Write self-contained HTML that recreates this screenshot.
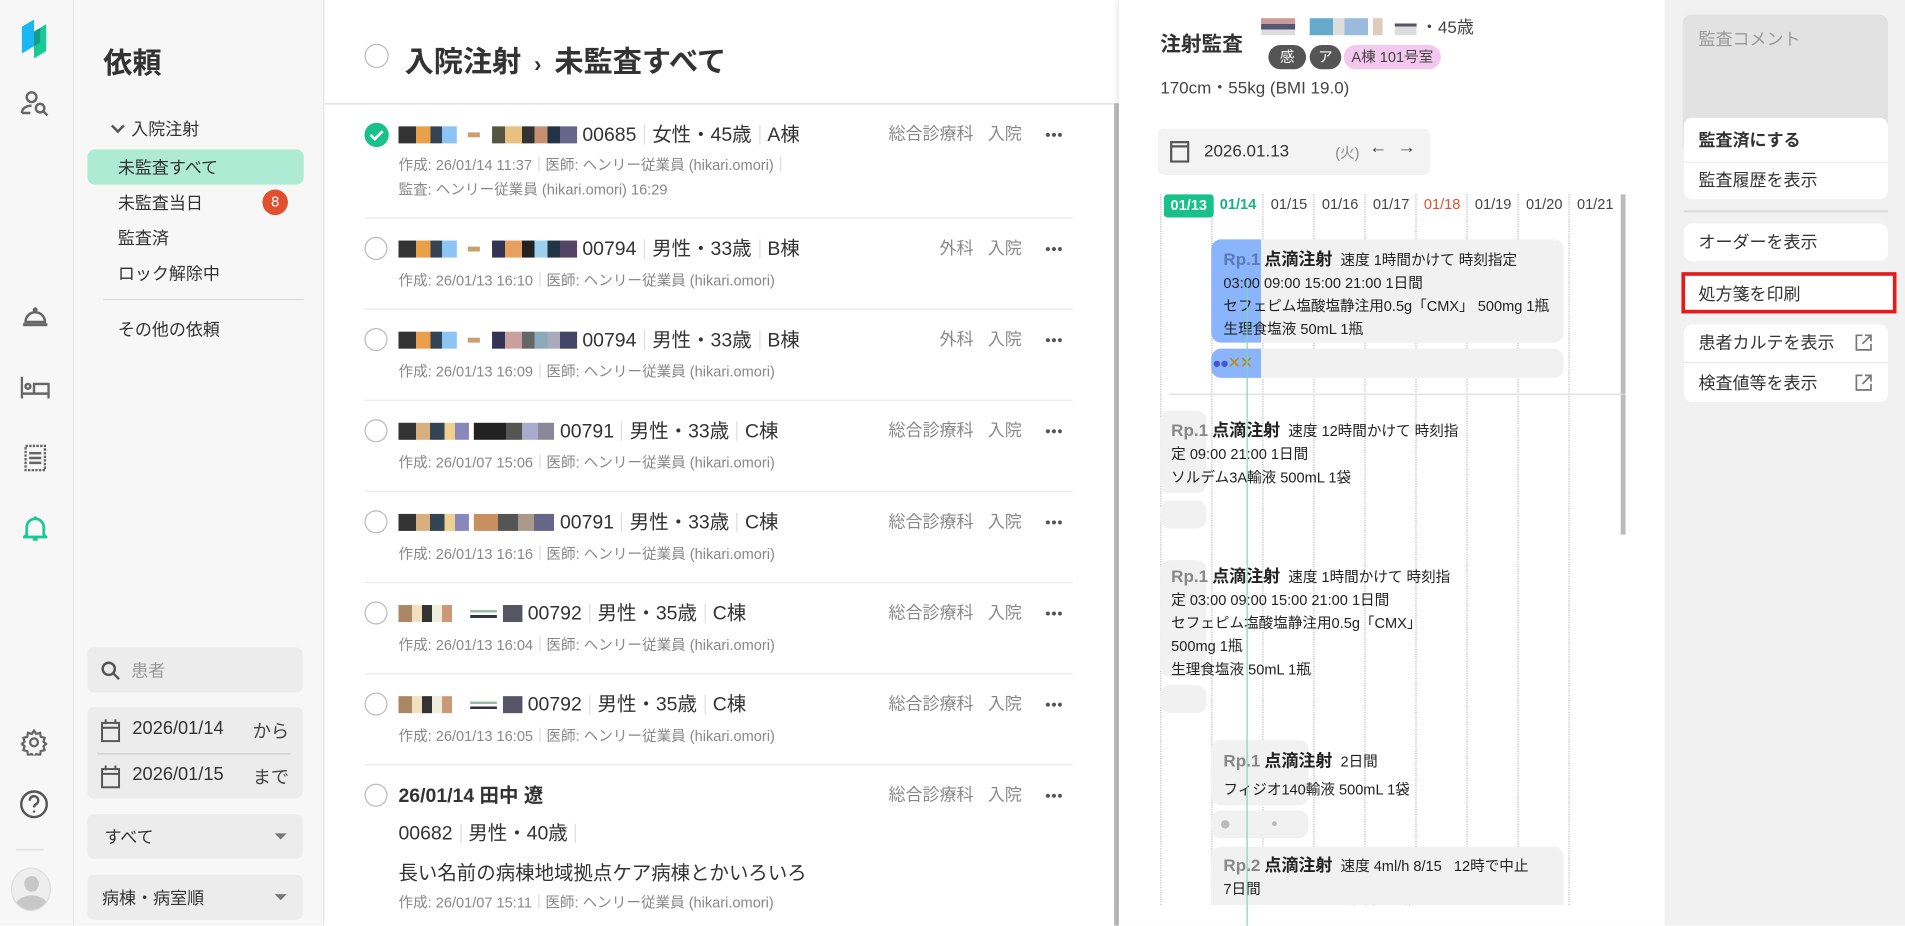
<!DOCTYPE html>
<html lang="ja"><head><meta charset="utf-8">
<style>
*{box-sizing:border-box;margin:0;padding:0}
html,body{width:1905px;height:926px;overflow:hidden;background:#fff}
body{font-family:"Liberation Sans","Noto Sans CJK JP",sans-serif;color:#333}
#w{position:absolute;left:0;top:0;width:1568px;height:762px;transform:scale(1.21492);transform-origin:0 0;overflow:hidden;background:#fff}
.a{position:absolute}
.rail{left:0;top:0;width:61px;height:762px;background:#f7f7f7;border-right:1px solid #e6e6e6}
.side{left:61px;top:0;width:206px;height:762px;background:#f7f7f7;border-right:1px solid #e4e4e4}
.nav{font-size:14px;color:#333;position:absolute;left:97px}
.inp{position:absolute;left:72px;width:177px;background:#ececec;border-radius:5px;font-size:14px}
.bl{display:inline-block;height:14px;vertical-align:-2px}
.row{position:absolute;left:300px;width:583px}
.circ{position:absolute;left:0;top:2px;width:19px;height:19px;border:1.5px solid #bbb;border-radius:50%}
.t1{position:absolute;left:28px;top:-2px;font-size:16px;white-space:nowrap;color:#333}
.sep{display:inline-block;width:1px;height:16px;background:#ddd;margin:0 6px;vertical-align:-3px}
.meta{position:absolute;left:28px;font-size:12px;color:#888;white-space:nowrap}
.meta .sep{height:12px;margin:0 5px;vertical-align:-1px}
.rt{position:absolute;right:42px;top:1px;font-size:14px;color:#888;white-space:nowrap}
.dots{position:absolute;right:9px;top:10px;width:14px;height:4px;background:radial-gradient(circle,#555 1.6px,transparent 1.8px) 0 0/5px 4px repeat-x}
.hr{position:absolute;left:300px;width:583px;height:1px;background:#eaeaea}
.btn{position:absolute;left:1386px;width:168px;background:#fff;font-size:14px;padding-left:12px;color:#333}
.vl{position:absolute;top:160px;height:585px;border-left:1px dotted #bbb}
.card{position:absolute;background:#f1f1f1;border-radius:8px}
.ct{font-size:12px;color:#222;line-height:19px;white-space:nowrap}
.rp{font-size:14px;color:#888;font-weight:bold}
.rn{font-size:14px;color:#222;font-weight:bold}
</style></head><body><div id="w">

<div class="a rail"></div>
<svg class="a" style="left:16px;top:14px" width="26" height="36" viewBox="0 0 26 36"><path d="M2 8 L12 2 L12 24 L2 30Z" fill="#1ab7f5"/><path d="M12 12 L22 6 L22 28 L12 34Z" fill="#17c993"/><path d="M12 12L17 9L17 21L12 24Z" fill="#169a8a"/></svg>
<svg class="a" style="left:17px;top:74px" width="24" height="24" viewBox="0 0 24 24" fill="none" stroke="#666" stroke-width="2"><circle cx="9" cy="6" r="4"/><path d="M1 19c0-4 4-6 8-6"/><path d="M1 19h7"/><circle cx="16" cy="15" r="3.5"/><path d="M19 18l3 3"/></svg>
<svg class="a" style="left:18px;top:252px" width="22" height="18" viewBox="0 0 22 18"><circle cx="11" cy="3" r="2" fill="#666"/><path d="M3 13 A8 8 0 0 1 19 13Z" fill="none" stroke="#666" stroke-width="2"/><rect x="1" y="14" width="20" height="2.5" fill="#666"/></svg>
<svg class="a" style="left:17px;top:310px" width="24" height="18" viewBox="0 0 24 18" fill="none" stroke="#666" stroke-width="2"><path d="M1 0v18M1 14h22v4M23 14V6H11v8"/><circle cx="6" cy="8" r="2"/></svg>
<svg class="a" style="left:20px;top:366px" width="18" height="22" viewBox="0 0 18 22" fill="none" stroke="#666" stroke-width="2"><rect x="1" y="1" width="16" height="20" stroke-dasharray="2 1"/><path d="M4 7h10M4 11h10M4 15h10"/></svg>
<svg class="a" style="left:19px;top:424px" width="20" height="22" viewBox="0 0 20 22" fill="none" stroke="#17c993" stroke-width="2.2"><path d="M3 16V10a7 7 0 0 1 14 0v6l2 2H1z"/><path d="M8 20h4"/><path d="M10 1v2"/></svg>
<svg class="a" style="left:17px;top:600px" width="22" height="22" viewBox="0 0 24 24" fill="none" stroke="#666" stroke-width="2"><circle cx="12" cy="12" r="3.5"/><path d="M12 1.5l2 3 3.5-1 .5 3.5 3.5 1-1 3.5 2.5 2-2.5 2 1 3.5-3.5 1-.5 3.5-3.5-1-2 3-2-3-3.5 1-.5-3.5-3.5-1 1-3.5-2.5-2 2.5-2-1-3.5 3.5-1 .5-3.5 3.5 1z"/></svg>
<svg class="a" style="left:16px;top:650px" width="24" height="24" viewBox="0 0 24 24" fill="none" stroke="#555" stroke-width="2"><circle cx="12" cy="12" r="10.5"/><path d="M8.5 9a3.5 3.5 0 1 1 5 3c-1 .6-1.5 1.2-1.5 2.5"/><circle cx="12" cy="18" r="1" fill="#555" stroke="none"/></svg>
<div class="a" style="left:13px;top:699px;width:23px;height:1px;background:#ddd"></div>
<div class="a" style="left:9px;top:714px;width:33px;height:36px;border-radius:50%;background:#eee;border:1px solid #ddd;overflow:hidden"><div class="a" style="left:10px;top:6px;width:12px;height:13px;border-radius:50%;background:#c8c8c8"></div><div class="a" style="left:2px;top:22px;width:28px;height:20px;border-radius:50%;background:#c8c8c8"></div></div>

<div class="a side"></div>
<div class="a" style="left:85px;top:32px;font-size:24px;font-weight:bold;color:#333">依頼</div>
<div class="nav" style="left:90px;top:96px"><span style="display:inline-block;width:8px;height:8px;border-left:2px solid #555;border-bottom:2px solid #555;transform:rotate(-45deg);margin:0 7px 3px 3px"></span>入院注射</div>
<div class="a" style="left:72px;top:123px;width:178px;height:29px;border-radius:6px;background:#aeebd5"></div>
<div class="nav" style="top:128px">未監査すべて</div>
<div class="nav" style="top:157px">未監査当日</div>
<div class="a" style="left:216px;top:156px;width:21px;height:21px;border-radius:50%;background:#e0502f;color:#fff;font-size:12px;text-align:center;line-height:21px">8</div>
<div class="nav" style="top:186px">監査済</div>
<div class="nav" style="top:215px">ロック解除中</div>
<div class="a" style="left:85px;top:246px;width:165px;height:1px;background:#ddd"></div>
<div class="nav" style="top:261px">その他の依頼</div>

<div class="inp" style="top:533px;height:37px;color:#999;padding:9px 0 0 36px">患者</div>
<svg class="a" style="left:83px;top:544px" width="16" height="16" viewBox="0 0 16 16" fill="none" stroke="#555" stroke-width="2"><circle cx="6.5" cy="6.5" r="5"/><path d="M10 10l5 5"/></svg>
<div class="inp" style="top:582px;height:75px"></div>
<div class="a" style="left:80px;top:620px;width:159px;height:1px;background:#ccc"></div>
<svg class="a" style="left:83px;top:592px" width="16" height="19" viewBox="0 0 16 19" fill="none" stroke="#555" stroke-width="1.6"><rect x="1" y="3" width="14" height="15"/><path d="M1 7h14M4 0v4M12 0v4"/></svg>
<svg class="a" style="left:83px;top:630px" width="16" height="19" viewBox="0 0 16 19" fill="none" stroke="#555" stroke-width="1.6"><rect x="1" y="3" width="14" height="15"/><path d="M1 7h14M4 0v4M12 0v4"/></svg>
<div class="a" style="left:109px;top:591px;font-size:15px">2026/01/14</div><div class="a" style="left:208px;top:591px;font-size:15px;color:#444">から</div>
<div class="a" style="left:109px;top:629px;font-size:15px">2026/01/15</div><div class="a" style="left:208px;top:629px;font-size:15px;color:#444">まで</div>
<div class="inp" style="top:670px;height:37px;padding:9px 0 0 14px">すべて</div>
<div class="a" style="left:226px;top:686px;border:5px solid transparent;border-top:5px solid #777"></div>
<div class="inp" style="top:720px;height:37px;padding:9px 0 0 12px">病棟・病室順</div>
<div class="a" style="left:226px;top:736px;border:5px solid transparent;border-top:5px solid #777"></div>

<div class="a" style="left:267px;top:85px;width:652px;height:1px;background:#ddd"></div>
<div class="a" style="left:300px;top:36px;width:20px;height:20px;border:1.5px solid #bbb;border-radius:50%"></div>
<div class="a" style="left:333px;top:31px;font-size:24px;font-weight:bold;color:#333">入院注射 <span style="font-size:18px;margin:0 4px">›</span> 未監査すべて</div>
<div class="a" style="left:917px;top:85px;width:4px;height:677px;background:#bbb"></div>

<div class="row" style="top:99px"><div class="circ" style="border:none;background:#17c188;width:20px;height:20px"><svg width="20" height="20" viewBox="0 0 20 20"><path d="M5 10l3.5 3.5L15 7" fill="none" stroke="#fff" stroke-width="2.2"/></svg></div>
<div class="t1"><span class="bl" style="width:48px;background:linear-gradient(90deg,#333 0 30%,#e8a04a 30% 55%,#345 55% 75%,#8cc4f5 75%)"></span> <span class="bl" style="width:10px;height:4px;vertical-align:3px;background:#c9a070;margin:0 5px"></span> <span class="bl" style="width:70px;background:linear-gradient(90deg,#554 0 15%,#e8c080 15% 35%,#333 35% 50%,#c89070 50% 65%,#234 65% 80%,#668 80%)"></span> 00685<span class="sep"></span>女性・45歳<span class="sep"></span>A棟</div>
<div class="rt">総合診療科 &nbsp; 入院</div><div class="dots"></div>
<div class="meta" style="top:28px">作成: 26/01/14 11:37<span class="sep"></span>医師: ヘンリー従業員 (hikari.omori)<span class="sep"></span></div>
<div class="meta" style="top:48px">監査: ヘンリー従業員 (hikari.omori) 16:29</div></div>
<div class="hr" style="top:179px"></div>

<div class="row" style="top:193px"><div class="circ"></div>
<div class="t1"><span class="bl" style="width:48px;background:linear-gradient(90deg,#333 0 30%,#e8a04a 30% 55%,#345 55% 75%,#8cc4f5 75%)"></span> <span class="bl" style="width:10px;height:4px;vertical-align:3px;background:#c9a070;margin:0 5px"></span> <span class="bl" style="width:70px;background:linear-gradient(90deg,#335 0 15%,#e8a060 15% 35%,#222 35% 50%,#9cd0f0 50% 65%,#234 65% 80%,#546 80%)"></span> 00794<span class="sep"></span>男性・33歳<span class="sep"></span>B棟</div>
<div class="rt">外科 &nbsp; 入院</div><div class="dots"></div>
<div class="meta" style="top:29px">作成: 26/01/13 16:10<span class="sep"></span>医師: ヘンリー従業員 (hikari.omori)</div></div>
<div class="hr" style="top:254px"></div>

<div class="row" style="top:268px"><div class="circ"></div>
<div class="t1"><span class="bl" style="width:48px;background:linear-gradient(90deg,#333 0 30%,#e8a04a 30% 55%,#345 55% 75%,#8cc4f5 75%)"></span> <span class="bl" style="width:10px;height:4px;vertical-align:3px;background:#c9a070;margin:0 5px"></span> <span class="bl" style="width:70px;background:linear-gradient(90deg,#335 0 15%,#c8a0a0 15% 35%,#666 35% 50%,#8ab 50% 65%,#aab 65% 80%,#446 80%)"></span> 00794<span class="sep"></span>男性・33歳<span class="sep"></span>B棟</div>
<div class="rt">外科 &nbsp; 入院</div><div class="dots"></div>
<div class="meta" style="top:29px">作成: 26/01/13 16:09<span class="sep"></span>医師: ヘンリー従業員 (hikari.omori)</div></div>
<div class="hr" style="top:329px"></div>

<div class="row" style="top:343px"><div class="circ"></div>
<div class="t1"><span class="bl" style="width:58px;background:linear-gradient(90deg,#333 0 25%,#d8b080 25% 45%,#345 45% 65%,#f0d090 65% 80%,#88b 80%)"></span> <span class="bl" style="width:66px;background:linear-gradient(90deg,#222 0 40%,#555 40% 60%,#aac 60% 80%,#889 80%)"></span> 00791<span class="sep"></span>男性・33歳<span class="sep"></span>C棟</div>
<div class="rt">総合診療科 &nbsp; 入院</div><div class="dots"></div>
<div class="meta" style="top:29px">作成: 26/01/07 15:06<span class="sep"></span>医師: ヘンリー従業員 (hikari.omori)</div></div>
<div class="hr" style="top:404px"></div>

<div class="row" style="top:418px"><div class="circ"></div>
<div class="t1"><span class="bl" style="width:58px;background:linear-gradient(90deg,#333 0 25%,#d8b080 25% 45%,#345 45% 65%,#f0d090 65% 80%,#88b 80%)"></span> <span class="bl" style="width:66px;background:linear-gradient(90deg,#c89060 0 30%,#555 30% 55%,#a98 55% 75%,#668 75%)"></span> 00791<span class="sep"></span>男性・33歳<span class="sep"></span>C棟</div>
<div class="rt">総合診療科 &nbsp; 入院</div><div class="dots"></div>
<div class="meta" style="top:29px">作成: 26/01/13 16:16<span class="sep"></span>医師: ヘンリー従業員 (hikari.omori)</div></div>
<div class="hr" style="top:479px"></div>

<div class="row" style="top:493px"><div class="circ"></div>
<div class="t1"><span class="bl" style="width:55px;background:linear-gradient(90deg,#a86 0 20%,#f0e0c0 20% 35%,#333 35% 50%,#eed 50% 65%,#c97 65% 80%,#fff 80%)"></span> <span class="bl" style="width:22px;background:linear-gradient(180deg,#fff 0 30%,#9ba 30% 45%,#fff 45% 60%,#334 60% 75%,#fff 75%)"></span> <span class="bl" style="width:16px;background:#556"></span> 00792<span class="sep"></span>男性・35歳<span class="sep"></span>C棟</div>
<div class="rt">総合診療科 &nbsp; 入院</div><div class="dots"></div>
<div class="meta" style="top:29px">作成: 26/01/13 16:04<span class="sep"></span>医師: ヘンリー従業員 (hikari.omori)</div></div>
<div class="hr" style="top:554px"></div>

<div class="row" style="top:568px"><div class="circ"></div>
<div class="t1"><span class="bl" style="width:55px;background:linear-gradient(90deg,#a86 0 20%,#f0e0c0 20% 35%,#333 35% 50%,#eed 50% 65%,#c97 65% 80%,#fff 80%)"></span> <span class="bl" style="width:22px;background:linear-gradient(180deg,#fff 0 30%,#9ba 30% 45%,#fff 45% 60%,#334 60% 75%,#fff 75%)"></span> <span class="bl" style="width:16px;background:#556"></span> 00792<span class="sep"></span>男性・35歳<span class="sep"></span>C棟</div>
<div class="rt">総合診療科 &nbsp; 入院</div><div class="dots"></div>
<div class="meta" style="top:29px">作成: 26/01/13 16:05<span class="sep"></span>医師: ヘンリー従業員 (hikari.omori)</div></div>
<div class="hr" style="top:629px"></div>

<div class="row" style="top:643px"><div class="circ"></div>
<div class="t1" style="font-weight:bold">26/01/14 田中 遼</div>
<div class="rt">総合診療科 &nbsp; 入院</div><div class="dots"></div>
<div class="t1" style="top:29px">00682<span class="sep"></span>男性・40歳<span class="sep"></span></div>
<div class="t1" style="top:62px">長い名前の病棟地域拠点ケア病棟とかいろいろ</div>
<div class="meta" style="top:91px">作成: 26/01/07 15:11<span class="sep"></span>医師: ヘンリー従業員 (hikari.omori)</div></div>

<div class="a" style="left:921px;top:0;width:449px;height:762px;background:#fff;box-shadow:-2px 0 4px rgba(0,0,0,.08)"></div>
<div class="a" style="left:955px;top:22px;font-size:17px;font-weight:bold;color:#333">注射監査</div>
<div class="a" style="left:1038px;top:12px;font-size:14px;color:#444;white-space:nowrap"><span class="bl" style="width:28px;background:linear-gradient(180deg,#c99 0 33%,#557 33% 66%,#ddd 66%)"></span> <span class="bl" style="width:48px;margin-left:8px;background:linear-gradient(90deg,#6ac 0 40%,#ddd 40% 60%,#9bd 60%)"></span> <span class="bl" style="width:8px;background:#dcb"></span> <span class="bl" style="width:18px;margin-left:6px;background:linear-gradient(180deg,#fff 0 30%,#556 30% 50%,#ddd 50%)"></span> ・45歳</div>
<div class="a" style="left:1044px;top:37px;width:31px;height:20px;border-radius:10px;background:#555;color:#fff;font-size:12px;text-align:center;line-height:20px">感</div>
<div class="a" style="left:1078px;top:37px;width:26px;height:20px;border-radius:10px;background:#555;color:#fff;font-size:12px;text-align:center;line-height:20px">ア</div>
<div class="a" style="left:1106px;top:37px;width:80px;height:20px;border-radius:10px;background:#f4c8ee;color:#444;font-size:12px;text-align:center;line-height:20px">A棟 101号室</div>
<div class="a" style="left:955px;top:62px;font-size:14px;color:#444">170cm・55kg (BMI 19.0)</div>

<div class="a" style="left:953px;top:106px;width:224px;height:38px;background:#f3f3f3;border-radius:5px"></div>
<svg class="a" style="left:963px;top:115px" width="16" height="19" viewBox="0 0 16 19" fill="none" stroke="#555" stroke-width="1.8"><rect x="1" y="2" width="14" height="16"/><path d="M1 5.5h14"/></svg>
<div class="a" style="left:991px;top:116px;font-size:14px;color:#333">2026.01.13</div>
<div class="a" style="left:1099px;top:117px;font-size:12px;color:#888">(火)</div>
<div class="a" style="left:1127px;top:113px;font-size:15px;color:#444">← &nbsp;→</div>

<div class="vl" style="left:955px"></div><div class="vl" style="left:997px"></div><div class="vl" style="left:1039px"></div><div class="vl" style="left:1081px"></div><div class="vl" style="left:1123px"></div><div class="vl" style="left:1165px"></div><div class="vl" style="left:1207px"></div><div class="vl" style="left:1249px"></div><div class="vl" style="left:1291px"></div>
<div class="a" style="left:1334px;top:160px;width:4px;height:280px;background:#bbb"></div>
<div class="a" style="left:958px;top:160px;width:41px;height:19px;border-radius:3px;background:#17c188;color:#fff;font-size:12px;font-weight:bold;text-align:center;line-height:19px">01/13</div>
<div class="a" style="top:161px;left:1004px;font-size:12px;color:#17b37e;font-weight:bold">01/14</div>
<div class="a" style="top:161px;left:1046px;font-size:12px;color:#444">01/15</div>
<div class="a" style="top:161px;left:1088px;font-size:12px;color:#444">01/16</div>
<div class="a" style="top:161px;left:1130px;font-size:12px;color:#444">01/17</div>
<div class="a" style="top:161px;left:1172px;font-size:12px;color:#e0502f">01/18</div>
<div class="a" style="top:161px;left:1214px;font-size:12px;color:#444">01/19</div>
<div class="a" style="top:161px;left:1256px;font-size:12px;color:#444">01/20</div>
<div class="a" style="top:161px;left:1298px;font-size:12px;color:#444">01/21</div>

<div class="card" style="left:997px;top:197px;width:290px;height:85px;background:linear-gradient(90deg,#8ab4fb 0 41px,#f1f1f1 41px)"></div>
<div class="a ct" style="left:1007px;top:204px"><span class="rp" style="color:#5a7ab8">Rp.1</span> <span class="rn">点滴注射</span> &nbsp;速度 1時間かけて 時刻指定<br>03:00 09:00 15:00 21:00 1日間<br>セフェピム塩酸塩静注用0.5g「CMX」 500mg 1瓶<br>生理食塩液 50mL 1瓶</div>
<div class="card" style="left:997px;top:287px;width:290px;height:24px;background:linear-gradient(90deg,#8ab4fb 0 41px,#f1f1f1 41px)"></div>
<div class="a" style="left:998px;top:291px;font-size:12px;color:#4456cc;letter-spacing:-1px">●●<span style="color:#b98a10;font-size:13px">✕✕</span></div>
<div class="a" style="left:962px;top:324px;width:376px;height:1px;background:#ddd"></div>

<div class="card" style="left:955px;top:338px;width:38px;height:68px"></div>
<div class="a ct" style="left:964px;top:345px"><span class="rp">Rp.1</span> <span class="rn">点滴注射</span> &nbsp;速度 12時間かけて 時刻指<br>定 09:00 21:00 1日間<br>ソルデム3A輸液 500mL 1袋</div>
<div class="card" style="left:955px;top:412px;width:38px;height:23px"></div>

<div class="card" style="left:955px;top:461px;width:38px;height:96px"></div>
<div class="a ct" style="left:964px;top:465px"><span class="rp">Rp.1</span> <span class="rn">点滴注射</span> &nbsp;速度 1時間かけて 時刻指<br>定 03:00 09:00 15:00 21:00 1日間<br>セフェピム塩酸塩静注用0.5g「CMX」<br>500mg 1瓶<br>生理食塩液 50mL 1瓶</div>
<div class="card" style="left:955px;top:564px;width:38px;height:23px"></div>

<div class="card" style="left:997px;top:609px;width:80px;height:54px"></div>
<div class="a ct" style="left:1007px;top:617px"><span class="rp">Rp.1</span> <span class="rn">点滴注射</span> &nbsp;2日間<br><span style="line-height:26px">フィジオ140輸液 500mL 1袋</span></div>
<div class="card" style="left:997px;top:667px;width:80px;height:23px"></div>
<div class="a" style="left:1005px;top:675px;width:7px;height:7px;border-radius:50%;background:#bbb"></div>
<div class="a" style="left:1047px;top:676px;width:4px;height:4px;border-radius:50%;background:#bbb"></div>
<div class="card" style="left:997px;top:697px;width:290px;height:70px;border-radius:8px 8px 0 0"></div>
<div class="a ct" style="left:1007px;top:703px"><span class="rp">Rp.2</span> <span class="rn">点滴注射</span> &nbsp;速度 4ml/h 8/15 &nbsp; 12時で中止<br>7日間<br>ニコランジル48mg注射用 1瓶</div>
<div class="a" style="left:921px;top:745px;width:449px;height:17px;background:#fff"></div>
<div class="a" style="left:1026px;top:234px;width:1px;height:528px;background:#7fd6b8"></div>

<div class="a" style="left:1370px;top:0;width:198px;height:762px;background:#f1f1f1"></div>
<div class="a" style="left:1385px;top:12px;width:169px;height:110px;background:#e2e2e2;border-radius:7px 7px 0 0"></div>
<div class="a" style="left:1398px;top:22px;font-size:14px;color:#999">監査コメント</div>
<div class="btn" style="top:97px;height:36px;border-radius:7px 7px 0 0;padding-top:8px;font-weight:bold">監査済にする</div>
<div class="btn" style="top:133px;height:31px;border-top:1px solid #e6e6e6;border-radius:0 0 7px 7px;padding-top:4px">監査履歴を表示</div>
<div class="a" style="left:1386px;top:173px;width:168px;height:2px;background:#ddd"></div>
<div class="btn" style="top:184px;height:31px;border-radius:7px;padding-top:5px">オーダーを表示</div>
<div class="btn" style="top:224px;height:34px;border:3px solid #e31b1b;left:1384px;width:177px;padding:5px 0 0 11px">処方箋を印刷</div>
<div class="btn" style="top:267px;height:31px;border-radius:7px 7px 0 0;padding-top:5px">患者カルテを表示</div>
<div class="btn" style="top:298px;height:33px;border-top:1px solid #e6e6e6;border-radius:0 0 7px 7px;padding-top:6px">検査値等を表示</div>
<svg class="a" style="left:1527px;top:275px" width="14" height="14" viewBox="0 0 14 14" fill="none" stroke="#777" stroke-width="1.4"><path d="M6 1H1v12h12V8M8 1h5v5M13 1L6 8"/></svg>
<svg class="a" style="left:1527px;top:308px" width="14" height="14" viewBox="0 0 14 14" fill="none" stroke="#777" stroke-width="1.4"><path d="M6 1H1v12h12V8M8 1h5v5M13 1L6 8"/></svg>

</div></body></html>
